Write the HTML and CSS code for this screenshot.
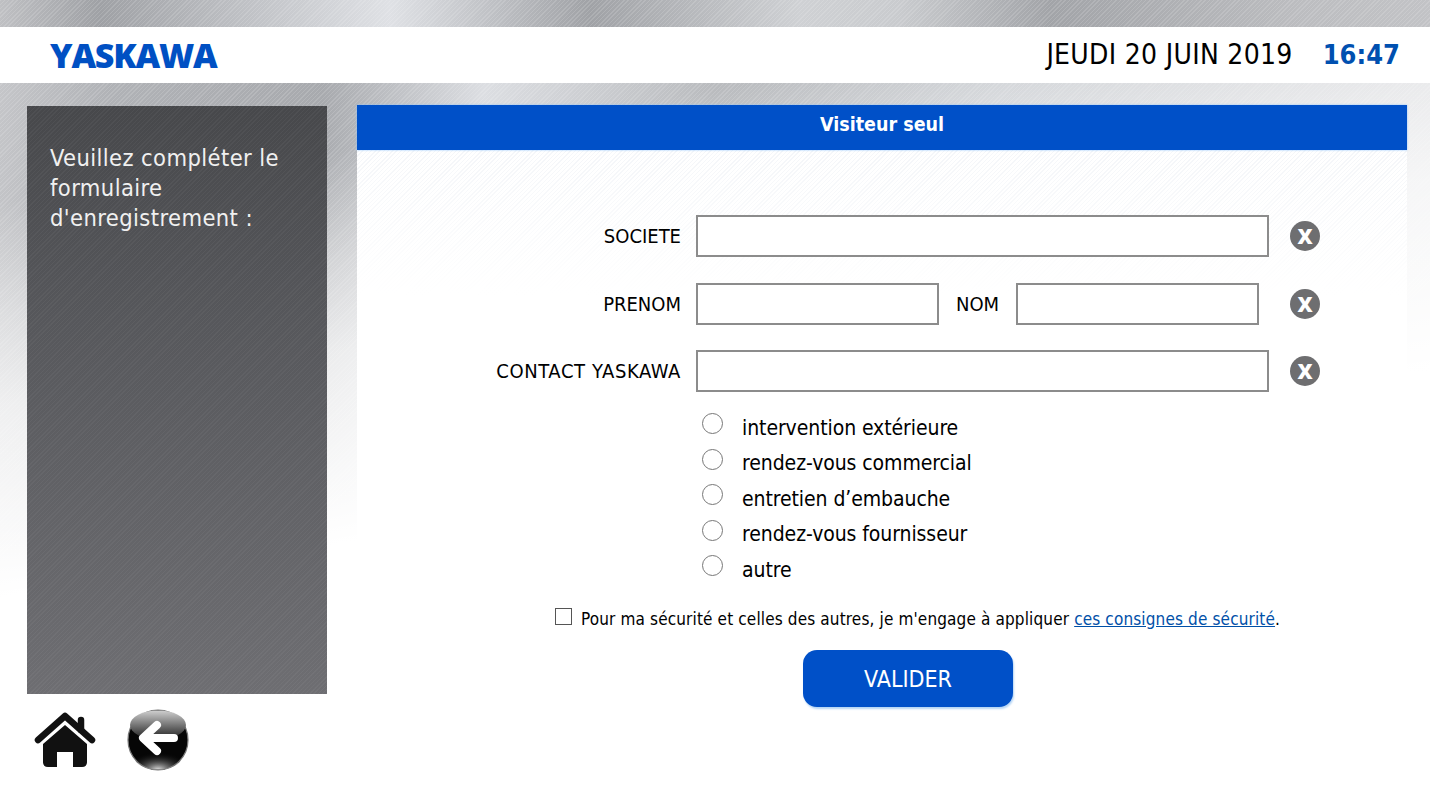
FILE: index.html
```html
<!DOCTYPE html>
<html lang="fr">
<head>
    <meta charset="UTF-8">
    <title>Visiteur seul</title>
    <link rel="stylesheet" href="styles.css">
</head>
<body>
<div class="main">
    <div class="top-band"></div>
    <div class="header">
        <div class="logo">YASKAWA</div>
        <div class="date">JEUDI 20 JUIN 2019</div>
        <div class="time">16:47</div>
    </div>
    <div class="content">
        <div class="side">
            <div class="side-box">
                <p>Veuillez compléter le formulaire d'enregistrement :</p>
            </div>
            <div class="nav">
                <svg class="home" width="62" height="58" viewBox="0 0 62 58">
                    <path d="M4 29 L31 5 L58 29" fill="none" stroke="#111" stroke-width="6.5" stroke-linecap="round" stroke-linejoin="round"/>
                    <path d="M47 19 V9" fill="none" stroke="#111" stroke-width="6.5" stroke-linecap="round"/>
                    <path d="M31 14 L53 33 V51 Q53 56 48 56 H39 V41 H23 V56 H14 Q9 56 9 51 V33 Z" fill="#111"/>
                </svg>
                <svg class="back" width="62" height="62" viewBox="0 0 62 62">
                    <defs>
                        <linearGradient id="shine" x1="0" y1="0" x2="0" y2="1">
                            <stop offset="0" stop-color="#cfcfcf"/>
                            <stop offset="1" stop-color="#1c1c1c"/>
                        </linearGradient>
                        <radialGradient id="glow" cx="0.5" cy="1" r="0.7">
                            <stop offset="0" stop-color="#dddddd"/>
                            <stop offset="1" stop-color="#000000" stop-opacity="0"/>
                        </radialGradient>
                    </defs>
                    <circle cx="31" cy="31" r="30" fill="#060606" stroke="#777" stroke-width="1.2"/>
                    <ellipse cx="31" cy="16" rx="28" ry="14.5" fill="url(#shine)"/>
                    <ellipse cx="31" cy="48" rx="24" ry="12.5" fill="url(#glow)"/>
                    <path d="M47 29 H17 M30 16 L16 29 L30 42" fill="none" stroke="#fff" stroke-width="8" stroke-linecap="round" stroke-linejoin="round"/>
                </svg>
            </div>
        </div>
        <div class="panel">
            <div class="panel-title">Visiteur seul</div>
            <div class="form">
                <div class="row">
                    <label class="lbl">SOCIETE</label>
                    <input class="field wide" type="text">
                    <span class="clear">X</span>
                </div>
                <div class="row row-tight">
                    <label class="lbl">PRENOM</label>
                    <input class="field half" type="text">
                    <label class="lbl-nom">NOM</label>
                    <input class="field half" type="text">
                    <span class="clear clear-nom">X</span>
                </div>
                <div class="row">
                    <label class="lbl lbl-long">CONTACT YASKAWA</label>
                    <input class="field wide" type="text">
                    <span class="clear">X</span>
                </div>
                <div class="radios">
                    <div class="radio"><span class="dot"></span>intervention extérieure</div>
                    <div class="radio"><span class="dot"></span>rendez-vous commercial</div>
                    <div class="radio"><span class="dot"></span>entretien d’embauche</div>
                    <div class="radio"><span class="dot"></span>rendez-vous fournisseur</div>
                    <div class="radio"><span class="dot"></span>autre</div>
                </div>
                <div class="agree">
                    <span class="box"></span>
                    <span>Pour ma sécurité et celles des autres, je m'engage à appliquer <a href="#">ces consignes de sécurité</a>.</span>
                </div>
                <button class="btn">VALIDER</button>
            </div>
        </div>
    </div>
</div>
</body>
</html>
```

FILE: styles.css
```css
*{
    margin: 0;
    padding: 0;
    box-sizing: border-box;
}
html,body {
    height: 100%;
    overflow: hidden;
}
body{
    font-family: "DejaVu Sans", "Liberation Sans", sans-serif;
    font-stretch: condensed;
    background-color: #ffffff;
}
.main{
    height: 802px;
    background:
        repeating-linear-gradient(135deg, rgba(255,255,255,0.14) 0, rgba(255,255,255,0.14) 1px, rgba(255,255,255,0) 1px, rgba(255,255,255,0) 3px),
        linear-gradient(171deg, rgba(255,255,255,0) 200px, rgba(255,255,255,0.45) 310px, rgba(255,255,255,0.75) 400px, #ffffff 590px),
        linear-gradient(95deg, #c6c7ca 0, #b0b2b6 120px, #a8aaae 330px, #dcdee2 490px, #b9bbbe 720px, #cdd0d4 1000px, #dadbde 1430px);
}
.top-band{
    height: 27px;
    background:
        repeating-linear-gradient(135deg, rgba(255,255,255,0.14) 0, rgba(255,255,255,0.14) 1px, rgba(255,255,255,0) 1px, rgba(255,255,255,0) 3px),
        linear-gradient(90deg, #bfc0c3 0, #9fa1a5 100px, #dfe1e5 390px, #a0a2a6 590px, #cfd1d4 800px, #c9cbce 900px, #a2a4a8 1050px, #bcbdc0 1300px, #c2c3c6 1430px);
}
.header{
    height: 56px;
    background-color: #ffffff;
    display: flex;
    align-items: center;
    padding: 0 30px 0 50px;
}
.logo{
    flex: 1;
    font-family: "Open Sans", "Liberation Sans", sans-serif;
    font-stretch: normal;
    font-weight: 800;
    font-size: 34px;
    letter-spacing: -1.2px;
    color: #0050c3;
}
.date{
    font-size: 28px;
    letter-spacing: 0.3px;
    color: #000000;
    margin-bottom: 2px;
}
.time{
    font-size: 27px;
    font-weight: bold;
    color: #0050b0;
    margin-left: 30px;
    margin-bottom: 2px;
}
.content{
    display: flex;
    padding: 22px 23px 0 27px;
    gap: 30px;
}
.side{
    width: 300px;
}
.side-box{
    height: 588px;
    margin-top: 1px;
    padding: 37px 22px 0 23px;
    background:
        repeating-linear-gradient(135deg, rgba(255,255,255,0.04) 0, rgba(255,255,255,0.04) 1px, rgba(255,255,255,0) 1px, rgba(255,255,255,0) 3px),
        linear-gradient(180deg, #47484b 0, #56575b 35%, #6e6e72 100%);
    color: #f0f0f0;
    font-size: 23.5px;
    letter-spacing: 0.4px;
    line-height: 30px;
}
.nav{
    display: flex;
    align-items: center;
    gap: 31px;
    padding: 15px 0 0 7px;
}
.panel{
    width: 1050px;
    height: 697px;
    background:
        linear-gradient(180deg, rgba(255,255,255,0.3) 45px, #ffffff 190px),
        repeating-linear-gradient(135deg, rgba(225,230,238,0.5) 0, rgba(225,230,238,0.5) 1px, rgba(255,255,255,0) 1px, rgba(255,255,255,0) 3px) 0 0 / 100% 220px no-repeat,
        #ffffff;
}
.panel-title{
    height: 45px;
    background-color: #0050c8;
    box-shadow: 0 0 2px #8fc4ff;
    color: #ffffff;
    font-size: 19.5px;
    font-weight: bold;
    text-align: center;
    line-height: 39px;
}
.form{
    padding-top: 65px;
}
.row{
    display: flex;
    align-items: center;
    height: 42px;
    margin-bottom: 26px;
}
.row-tight{
    margin-bottom: 25px;
}
.lbl{
    width: 324px;
    text-align: right;
    font-size: 20px;
    color: #000000;
    margin-right: 15px;
    white-space: nowrap;
}
.lbl-long{
    letter-spacing: 0.6px;
}
.lbl-nom{
    width: 77px;
    text-align: center;
    font-size: 20px;
    color: #000000;
}
.field{
    height: 42px;
    border: 2px solid #8c8c8c;
    background-color: #ffffff;
    outline: none;
}
.wide{
    width: 573px;
}
.half{
    width: 243px;
}
.clear{
    width: 30px;
    height: 30px;
    border-radius: 50%;
    background-color: #6e6e70;
    color: #ffffff;
    font-family: "Open Sans", sans-serif;
    font-stretch: normal;
    font-size: 21px;
    font-weight: 800;
    text-align: center;
    line-height: 30px;
    margin-left: 21px;
}
.clear-nom{
    margin-left: 31px;
}
.radios{
    margin-top: -8px;
    padding-left: 345px;
}
.radio{
    display: flex;
    align-items: center;
    height: 35.5px;
    font-size: 21px;
    letter-spacing: -0.08px;
    color: #000000;
}
.dot{
    width: 21px;
    height: 21px;
    border: 1px solid #777777;
    border-radius: 50%;
    background-color: #ffffff;
    margin-right: 19px;
    position: relative;
    top: -4px;
}
.agree{
    display: flex;
    align-items: center;
    margin-top: 21px;
    padding-left: 198px;
    font-size: 17px;
    letter-spacing: 0.14px;
    color: #000000;
}
.box{
    width: 17px;
    height: 17px;
    border: 1px solid #555555;
    margin-right: 9px;
    position: relative;
    top: -2px;
}
.agree a{
    color: #0050a8;
}
.btn{
    display: block;
    width: 210px;
    height: 57px;
    margin: 21px 0 0 446px;
    padding-top: 2px;
    border: none;
    border-radius: 14px;
    background-color: #0050c8;
    box-shadow: 1px 2px 2px #b5d5f5;
    color: #ffffff;
    font-family: "DejaVu Sans", sans-serif;
    font-stretch: condensed;
    font-size: 23px;
}
```
